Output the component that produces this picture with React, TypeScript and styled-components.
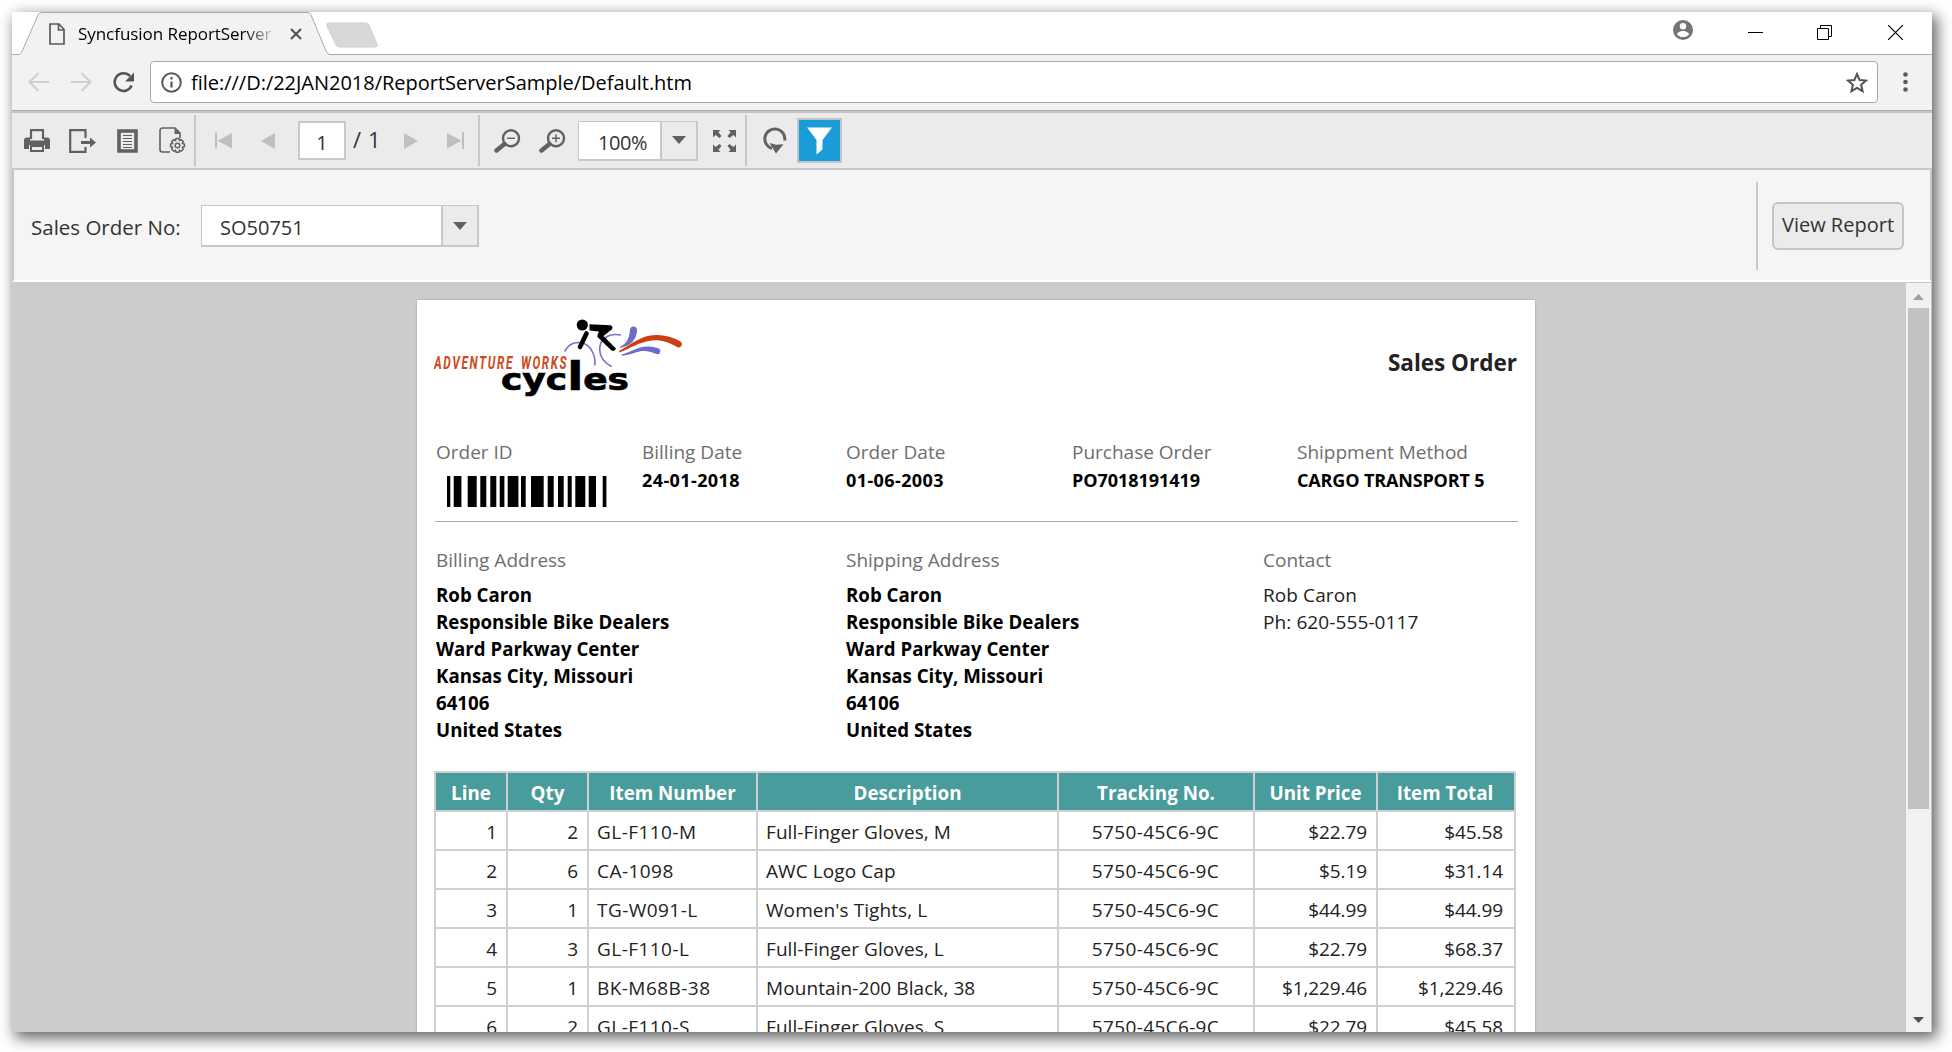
import React, { ReactNode } from "react";
import styled, { createGlobalStyle } from "styled-components";

const Global = createGlobalStyle`
  * { box-sizing: border-box; }
  html, body { margin: 0; padding: 0; background: #fff; overflow: hidden; }
  svg { display: block; flex: none; }
`;

const Desktop = styled.div`
  width: 1952px;
  height: 1052px;
  padding: 12px 20px 20px 12px;
  overflow: hidden;
  background: #fff;
  font-family: "Open Sans", "Noto Sans", sans-serif;
  font-size: 19px;
  color: #000;
`;

const BrowserWindow = styled.div`
  width: 1920px;
  height: 1020px;
  display: flex;
  flex-direction: column;
  background: #fff;
  box-shadow: 4px 5px 14px 1px rgba(0, 0, 0, 0.62);
`;

const Text = styled.span<{ size?: number; weight?: number; track?: number; color?: string; line?: number }>`
  display: block;
  white-space: pre;
  font-size: ${(p) => p.size ?? 19}px;
  font-weight: ${(p) => p.weight ?? 400};
  letter-spacing: ${(p) => p.track ?? 0}px;
  color: ${(p) => p.color ?? "#000"};
  line-height: ${(p) => p.line ?? 27}px;
`;

/* ---------- Browser chrome ---------- */

const TitleBar = styled.div`
  height: 43px;
  flex: none;
  display: flex;
  background: linear-gradient(#aaa, #aaa) 0 42px / 100% 1px no-repeat #fff;
`;

const Tab = styled.div`
  position: relative;
  width: 322px;
  height: 43px;
  display: flex;
  align-items: center;
  padding-left: 37px;
`;

const TabShape = styled.svg`
  position: absolute;
  left: 0;
  top: 0;
`;

const TabTitle = styled.div`
  position: relative;
  width: 200px;
  margin-left: 13px;
  overflow: hidden;
  mask-image: linear-gradient(90deg, #000 165px, transparent 200px);
`;

const TabItem = styled.div<{ left?: number }>`
  position: relative;
  margin-left: ${(p) => p.left ?? 0}px;
`;

const NewTab = styled.div`
  margin: 10px 0 0 -9px;
`;

const WindowControls = styled.div`
  margin-left: auto;
  display: flex;
  align-items: flex-start;
  padding: 8px 29px 0 0;
`;

const ControlSlot = styled.div<{ left?: number; top?: number }>`
  margin: ${(p) => p.top ?? 0}px 0 0 ${(p) => p.left ?? 0}px;
`;

const NavBar = styled.div`
  height: 58px;
  flex: none;
  display: flex;
  align-items: flex-start;
  padding-top: 6px;
  background: #f2f2f2;
  border-bottom: 2px solid #c4c4c4;
  box-shadow: inset 0 -1px #ababab;
`;

const NavButtons = styled.div`
  width: 138px;
  height: 42px;
  display: flex;
  align-items: center;
  padding-left: 16px;
`;

const AddressBar = styled.div`
  width: 1728px;
  height: 42px;
  display: flex;
  align-items: center;
  padding: 0 9px 0 10px;
  border: 1px solid #a9a9a9;
  border-radius: 4px;
  background: #fff;
`;

const Grow = styled.div`
  flex: 1;
`;

/* ---------- Viewer toolbar ---------- */

const Toolbar = styled.div`
  height: 57px;
  flex: none;
  display: flex;
  align-items: center;
  background: #ebebeb;
  border-bottom: 2px solid #c8c8c8;
`;

const ToolGroup = styled.div<{ width: number; pad: number }>`
  width: ${(p) => p.width}px;
  height: 51px;
  display: flex;
  align-items: center;
  padding-left: ${(p) => p.pad}px;
  border-right: 2px solid #c8c8c8;

  &:last-child { border-right: 0; }
`;

const Slot = styled.div<{ left?: number; lift?: number }>`
  margin-left: ${(p) => p.left ?? 0}px;
  padding-bottom: ${(p) => p.lift ?? 0}px;
`;

const PageInput = styled.div`
  width: 48px;
  height: 39px;
  margin-left: 23px;
  display: flex;
  align-items: center;
  justify-content: center;
  padding-top: 3px;
  border: 2px solid #c8c8c8;
  background: #fff;
`;

const Select = styled.div<{ width: number; height: number; left: number }>`
  width: ${(p) => p.width}px;
  height: ${(p) => p.height}px;
  margin-left: ${(p) => p.left}px;
  display: flex;
  border: solid #c8c8c8;
  border-width: 1px 2px 2px 1px;
  background: #fff;
`;

const SelectValue = styled.div<{ pad: number }>`
  flex: 1;
  display: flex;
  align-items: center;
  padding: 4px 0 0 ${(p) => p.pad}px;
`;

const SelectArrow = styled.div`
  width: 36px;
  display: flex;
  align-items: center;
  justify-content: center;
  border-left: 2px solid #c8c8c8;
  background: #ebebeb;
`;

const FilterButton = styled.div`
  width: 45px;
  height: 45px;
  margin-left: 10px;
  display: flex;
  align-items: center;
  justify-content: center;
  border: 2px solid #c4c4c4;
  background: #1a9cd9;
`;

/* ---------- Parameters ---------- */

const Params = styled.div`
  height: 112px;
  flex: none;
  display: flex;
  align-items: flex-start;
  border: solid #c8c8c8;
  border-width: 0 2px;
  border-bottom: 2px solid #fff;
  background: #f5f5f5;
`;

const ParamField = styled.div`
  display: flex;
  align-items: center;
  padding: 35px 0 0 17px;
`;

const ParamLabel = styled.div`
  width: 170px;
  padding-top: 2px;
`;

const ParamActions = styled.div`
  width: 174px;
  height: 88px;
  margin: 12px 0 0 auto;
  padding: 20px 0 0 14px;
  border-left: 2px solid #c8c8c8;
`;

const Button = styled.div`
  width: 132px;
  height: 48px;
  display: flex;
  justify-content: center;
  padding-top: 7px;
  border: 2px solid #c4c4c4;
  border-radius: 6px;
  background: #ebebeb;
`;

/* ---------- Report ---------- */

const Viewer = styled.div`
  flex: 1;
  min-height: 0;
  display: flex;
  overflow: hidden;
  background: #ccc;
`;

const Canvas = styled.div`
  width: 1894px;
  padding: 18px 0 0 405px;
`;

const Sheet = styled.div`
  width: 1118px;
  height: 800px;
  padding: 16px 17px 0 17px;
  background: #fff;
  box-shadow: 0 0 2px #999;
`;

const SheetHeader = styled.div`
  height: 122px;
  display: flex;
  justify-content: space-between;
`;

const Title = styled.div`
  padding: 33px 1px 0 0;
`;

const Summary = styled.div`
  display: grid;
  grid-template-columns: 206px 204px 226px 225px auto;
  height: 84px;
  margin-left: 1px;
  padding: 1px 0 0 1px;
  border-bottom: 1px solid #ababab;
`;

const Barcode = styled.div`
  padding: 10px 0 0 11px;
`;

const Addresses = styled.div`
  display: grid;
  grid-template-columns: 410px 417px auto;
  height: 249px;
  padding: 25px 0 0 2px;
`;

const AddressLines = styled.div<{ top: number }>`
  padding-top: ${(p) => p.top}px;
`;

const Table = styled.div`
  width: 1082px;
  border: solid #d0d0d0;
  border-width: 2px 0 0 2px;
`;

const Row = styled.div`
  display: grid;
  grid-template-columns: 72px 81px 169px 301px 196px 123px 138px;
  height: 39px;
`;

const Cell = styled.div<{ align?: string; head?: boolean }>`
  display: flex;
  justify-content: ${(p) => p.align ?? "flex-start"};
  padding: 7px ${(p) => (p.head ? 7 : 9)}px 0 ${(p) => (p.head ? 7 : 8)}px;
  border: solid #d0d0d0;
  border-width: 0 2px 2px 0;
  background: ${(p) => (p.head ? "#489c9b" : "#fff")};

  &:last-child { padding-right: ${(p) => (p.head ? 9 : 11)}px; }
`;

/* ---------- Scrollbar ---------- */

const Scrollbar = styled.div`
  width: 26px;
  display: flex;
  flex-direction: column;
  align-items: center;
  padding: 11px 1px 9px 0;
  border-right: 1px solid #c4c4c4;
  border-top: 1px solid #c4c4c4;
  background: #f1f1f1;
`;

const Thumb = styled.div`
  width: 21px;
  height: 501px;
  margin-top: 8px;
  background: #c1c1c1;
`;

/* ---------- Icons ---------- */

const G = "#5f6163";

const Svg = ({ w, h, children }: { w: number; h: number; children: ReactNode }) => (
  <svg width={w} height={h} viewBox={`0 0 ${w} ${h}`} fill="none">{children}</svg>
);

const Caret = () => (
  <Svg w={14} h={8}><path d="M0 0h14L7 8z" fill={G} /></Svg>
);

const PrintIcon = () => (
  <Svg w={26} h={24}>
    <path d="M7 10V1.200h12V10" stroke={G} strokeWidth="2.200" />
    <path d="M3 8.500h3v3h14v-3h3a3 3 0 0 1 3 3V20h-5v-4H5v4H0v-8.500a3 3 0 0 1 3-3z" fill={G} />
    <path d="M7 17h12v5H7z" fill="#ebebeb" stroke={G} strokeWidth="2" />
  </Svg>
);

const ExportIcon = () => (
  <Svg w={27} h={24}>
    <path d="M16.500 9V1.200H1.200v21.600h15.300V18" stroke={G} strokeWidth="2.200" />
    <path d="M12 12h9V8.500l6 5-6 5V15h-9z" fill={G} />
  </Svg>
);

const LayoutIcon = () => (
  <Svg w={21} h={24}>
    <path d="M2 2h17v20H2z" fill="#ebebeb" stroke={G} strokeWidth="3.600" />
    <path d="M6 6.500h9M6 9.500h9M6 12.500h9M6 15.500h9M6 18.500h9" stroke={G} strokeWidth="1.200" />
  </Svg>
);

const PageSetupIcon = () => (
  <Svg w={27} h={27}>
    <path d="M11 25H3.500A2.500 2.500 0 0 1 1 22.500v-19A2.500 2.500 0 0 1 3.500 1H16l5 5v5" stroke={G} strokeWidth="1.600" />
    <path d="M15.500 1v6h6z" fill={G} />
    <path d="M17 11.500h3l.5 2 1.800-.8 2 2-.9 1.800 2 .6v2.600l-2 .6.9 1.900-2 2-1.800-.9-.6 2h-2.800l-.6-2-1.800.9-2-2 .9-1.900-2-.6v-2.600l2-.6-.9-1.800 2-2 1.800.8z" fill="#ebebeb" stroke={G} strokeWidth="1.500" />
    <circle cx="18.500" cy="18.500" r="2.300" stroke={G} strokeWidth="1.500" />
  </Svg>
);

const N = "#bfbfbf";
const FirstIcon = () => <Svg w={17} h={17}><path d="M0 .5h2v16H0zM17 1v15.500L2.500 8.700z" fill={N} /></Svg>;
const PrevIcon = () => <Svg w={14} h={16}><path d="M14 0v16L0 8z" fill={N} /></Svg>;
const NextIcon = () => <Svg w={14} h={16}><path d="M0 0v16l14-8z" fill={N} /></Svg>;
const LastIcon = () => <Svg w={17} h={17}><path d="M15 0h2v17h-2zM0 1v15.500l14.500-7.800z" fill={N} /></Svg>;

const ZoomIcon = ({ plus }: { plus?: boolean }) => (
  <Svg w={27} h={24}>
    <circle cx="17" cy="9.300" r="8" stroke={G} strokeWidth="2.400" />
    <path d="M10.500 15L2.500 21.500" stroke={G} strokeWidth="4.400" strokeLinecap="round" />
    <path d={plus ? "M13 9.300h8M17 5.300v8" : "M13 9.300h8"} stroke={G} strokeWidth="1.400" />
  </Svg>
);

const FitIcon = () => (
  <Svg w={23} h={22}>
    <g fill={G}>
      <path d="M0 0h7.500L5.400 2.200 8.500 6 6.500 8 2.600 5 0 7.500z" />
      <path d="M23 0h-7.500l2.100 2.200L14.500 6l2 2 3.900-3L23 7.500z" />
      <path d="M0 22h7.500l-2.100-2.200L8.500 16l-2-2-3.900 3L0 14.500z" />
      <path d="M23 22h-7.500l2.100-2.200L14.500 16l2-2 3.900 3 2.600-2.500z" />
    </g>
  </Svg>
);

const RefreshIcon = () => (
  <Svg w={24} h={27}>
    <path d="M9 21.500A10 10 0 1 1 21.700 13.500" stroke={G} strokeWidth="3" />
    <path d="M6.500 16l6.500 1.800 7.500-.6-7.500 9.300z" fill={G} />
  </Svg>
);

const FunnelIcon = () => (
  <Svg w={25} h={28}><path d="M0 .5h25L15.500 13v9.500l-6 5V13z" fill="#fff" /></Svg>
);

const BARS: [number, number][] = [
  [0, 3.3], [6.7, 7.7], [20.7, 9], [33.3, 6], [43.3, 6], [52.7, 4.7], [60.7, 10.7], [74, 4.7],
  [84, 12.7], [100.7, 6], [111, 5.7], [120.7, 4], [128.3, 10], [141.7, 7.3], [155.7, 3.7],
];

const Logo = () => (
  <svg width="255" height="84" viewBox="0 0 255 84">
    <g fill="none" stroke="#7672cc" strokeWidth="1.600">
      <path d="M130.500 35.500C134 29 139 26.300 145 26.500c6.500.3 11 4 13.500 9.500 2 4 3.500 8 2 13.500" />
      <path d="M187 19c-5-.8-10-.7-14 1.500-5 3-7.500 8-7.300 13.500.3 7.500 5 13 12 16.500" />
    </g>
    <g fill="#6f6bcb">
      <path d="M186 31c7-4 9-8 10-17a3.500 3.500 0 0 1 7 0c0 10-7 16-17 18z" />
      <path d="M187.500 38.500c8.500-1.500 15.500-8 25.500-8 7 0 11 1.500 12.500 2.500a3 3 0 0 1-3 5c-8.500-4-14.500-3.500-19.500-2-6 2-10 3.500-15 3.800z" />
    </g>
    <path d="M185 35c13-7 22-16 37-16 12 0 21 4 25 7a3.300 3.300 0 0 1-3 5.500c-10-5.500-18-8-26-7-13 1.500-21 7.500-32.500 12z" fill="#cc3d12" />
    <circle cx="148.300" cy="9" r="5.600" />
    <path d="M155.500 8.300l21 .9q3 1 1.500 4L169.500 20l12.500 12.500q-1.500 3.500-4.500 2L163.500 21q-.5-2 1.500-5.500l-9.500-1z" />
    <path d="M152.500 17.500L146 31" stroke="#000" strokeWidth="4.600" strokeLinecap="round" />
    <g fontFamily="Roboto, sans-serif" fontStyle="italic" fontWeight="700" fontSize="18.500" fill="#cc4a20" letterSpacing="2.500">
      <text x="0" y="52.500" textLength="80" lengthAdjust="spacingAndGlyphs">ADVENTURE</text>
      <text x="87" y="52.500" textLength="47" lengthAdjust="spacingAndGlyphs">WORKS</text>
    </g>
    <text transform="translate(67 73.500) scale(1.200 1)" fontFamily="'DejaVu Sans', sans-serif" fontWeight="700" fontSize="30" stroke="#000" strokeWidth=".7">
      cyc<tspan fontSize="39">l</tspan>es
    </text>
  </svg>
);

/* ---------- Data ---------- */

const ADDRESS = ["Rob Caron", "Responsible Bike Dealers", "Ward Parkway Center", "Kansas City, Missouri", "64106", "United States"];
const SUMMARY: [string, string, number][] = [
  ["Billing Date", "24-01-2018", 0.4],
  ["Order Date", "01-06-2003", 0.4],
  ["Purchase Order", "PO7018191419", -0.05],
  ["Shippment Method", "CARGO TRANSPORT 5", -0.15],
];
const HEAD = ["Line", "Qty", "Item Number", "Description", "Tracking No.", "Unit Price", "Item Total"];
const ALIGN = ["flex-end", "flex-end", "flex-start", "flex-start", "center", "flex-end", "flex-end"];
const TRACK = [0, 0, 0.45, 0.08, 0.35, -0.1, -0.1];
const ROWS = [
  ["1", "2", "GL-F110-M", "Full-Finger Gloves, M", "5750-45C6-9C", "$22.79", "$45.58"],
  ["2", "6", "CA-1098", "AWC Logo Cap", "5750-45C6-9C", "$5.19", "$31.14"],
  ["3", "1", "TG-W091-L", "Women's Tights, L", "5750-45C6-9C", "$44.99", "$44.99"],
  ["4", "3", "GL-F110-L", "Full-Finger Gloves, L", "5750-45C6-9C", "$22.79", "$68.37"],
  ["5", "1", "BK-M68B-38", "Mountain-200 Black, 38", "5750-45C6-9C", "$1,229.46", "$1,229.46"],
  ["6", "2", "GL-F110-S", "Full-Finger Gloves, S", "5750-45C6-9C", "$22.79", "$45.58"],
];

const Label = ({ children }: { children: ReactNode }) => <Text size={19} color="#6e6e6e">{children}</Text>;

export default function App() {
  return (
    <Desktop>
      <Global />
      <BrowserWindow>
        <TitleBar>
          <Tab>
            <TabShape width="322" height="43" viewBox="0 0 322 43">
              <path d="M0 42.500h6q3 0 4-3L26 3q1-2.500 4-2.500h265q3 0 4 2.500l15 36q1.500 3.500 4 3.500h4V43H0z" fill="#f2f2f2" />
              <path d="M0 42.500h6q3 0 4-3L26 3q1-2.500 4-2.500h265q3 0 4 2.500l15 36q1.500 3.500 4 3.500h4" fill="none" stroke="#aaa" />
            </TabShape>
            <TabItem>
              <Svg w={16} h={22}><path d="M1 1h9l5 5.500V21H1zM9.500 1v6H15" stroke="#5a5a5a" strokeWidth="1.700" /></Svg>
            </TabItem>
            <TabTitle><Text size={17} line={24} track={-0.05}>Syncfusion ReportServer S</Text></TabTitle>
            <TabItem left={12}>
              <Svg w={12} h={12}><path d="M1 1l10 10M11 1L1 11" stroke="#505050" strokeWidth="2" /></Svg>
            </TabItem>
          </Tab>
          <NewTab>
            <Svg w={53} h={27}><path d="M3 1h37q3 0 4 2l8 19q1 3-2 3H15q-3 0-4-2L2 4q-1-3 1-3z" fill="#d8d8d8" stroke="#d0d0d0" /></Svg>
          </NewTab>
          <WindowControls>
            <Svg w={20} h={20}>
              <circle cx="10" cy="10" r="10" fill="#747474" />
              <circle cx="10" cy="6.300" r="3.200" fill="#fff" />
              <path d="M4 14.500c0-2.300 3.500-3.500 6-3.500s6 1.200 6 3.500c-2.800 3.400-9.200 3.400-12 0z" fill="#fff" />
            </Svg>
            <ControlSlot left={55} top={12}><Svg w={15} h={1}><path d="M0 .5h15" stroke="#000" /></Svg></ControlSlot>
            <ControlSlot left={54} top={5}><Svg w={15} h={15}><path d="M.5 3.500h11v11H.5zM3.500 3.500v-3h11v11h-3" stroke="#000" /></Svg></ControlSlot>
            <ControlSlot left={56} top={5}><Svg w={15} h={15}><path d="M0 0l15 15M15 0L0 15" stroke="#000" strokeWidth="1.200" /></Svg></ControlSlot>
          </WindowControls>
        </TitleBar>

        <NavBar>
          <NavButtons>
            <Svg w={21} h={20}><path d="M21 10H2M10.500 1L1.500 10l9 9" stroke="#d0d0d0" strokeWidth="2.200" /></Svg>
            <Slot left={22}><Svg w={21} h={20}><path d="M0 10h19M10.500 1l9 9-9 9" stroke="#d0d0d0" strokeWidth="2.200" /></Svg></Slot>
            <Slot left={21}>
              <Svg w={22} h={21}>
                <path d="M17 4.200A8.800 8.800 0 1 0 18.600 13.500" stroke="#555" strokeWidth="2.600" />
                <path d="M21 .5v9h-9z" fill="#555" />
              </Svg>
            </Slot>
          </NavButtons>
          <AddressBar>
            <Svg w={21} h={21}>
              <circle cx="10.500" cy="10.500" r="9.300" stroke="#5a5a5a" strokeWidth="2" />
              <path d="M10.500 9.500v6M10.500 5v2.500" stroke="#5a5a5a" strokeWidth="2.200" />
            </Svg>
            <Slot left={9}><Text size={20} track={-0.02}>file:///D:/22JAN2018/ReportServerSample/Default.htm</Text></Slot>
            <Grow />
            <Svg w={22} h={21}><path d="M11 2l2.600 6 6.400.6-4.900 4.200 1.500 6.400L11 15.800l-5.600 3.400 1.500-6.400L2 8.600 8.400 8z" stroke="#555" strokeWidth="2" /></Svg>
          </AddressBar>
          <Slot left={25}>
            <Svg w={5} h={42}><g fill="#5a5a5a"><circle cx="2.500" cy="13.500" r="2.300" /><circle cx="2.500" cy="21" r="2.300" /><circle cx="2.500" cy="28.500" r="2.300" /></g></Svg>
          </Slot>
        </NavBar>

        <Toolbar>
          <ToolGroup width={184} pad={12}>
            <PrintIcon />
            <Slot left={19}><ExportIcon /></Slot>
            <Slot left={21}><LayoutIcon /></Slot>
            <Slot left={21}><PageSetupIcon /></Slot>
          </ToolGroup>
          <ToolGroup width={284} pad={19}>
            <FirstIcon />
            <Slot left={29}><PrevIcon /></Slot>
            <PageInput><Text size={20} color="#333">1</Text></PageInput>
            <Slot left={7} lift={2}><Text size={22} color="#333" track={0.6}>/ 1</Text></Slot>
            <Slot left={23}><NextIcon /></Slot>
            <Slot left={29}><LastIcon /></Slot>
          </ToolGroup>
          <ToolGroup width={267} pad={14}>
            <ZoomIcon />
            <Slot left={18}><ZoomIcon plus /></Slot>
            <Select width={120} height={40} left={12}>
              <SelectValue pad={19}><Text size={20} color="#333" track={-0.4}>100%</Text></SelectValue>
              <SelectArrow><Caret /></SelectArrow>
            </Select>
            <Slot left={15}><FitIcon /></Slot>
          </ToolGroup>
          <ToolGroup width={200} pad={16}>
            <RefreshIcon />
            <FilterButton><FunnelIcon /></FilterButton>
          </ToolGroup>
        </Toolbar>

        <Params>
          <ParamField>
            <ParamLabel><Text size={20.5} color="#333">Sales Order No:</Text></ParamLabel>
            <Select width={278} height={42} left={0}>
              <SelectValue pad={18}><Text size={20} color="#333">SO50751</Text></SelectValue>
              <SelectArrow><Caret /></SelectArrow>
            </Select>
          </ParamField>
          <ParamActions><Button><Text size={20} color="#333">View Report</Text></Button></ParamActions>
        </Params>

        <Viewer>
          <Canvas>
            <Sheet>
              <SheetHeader>
                <Logo />
                <Title><Text size={22.5} weight={700} color="#222">Sales Order</Text></Title>
              </SheetHeader>
              <Summary>
                <div>
                  <Label>Order ID</Label>
                  <Barcode>
                    <Svg w={160} h={31}>
                      {BARS.map(([x, w]) => <rect key={x} x={x} y="0" width={w} height="31" fill="#000" />)}
                    </Svg>
                  </Barcode>
                </div>
                {SUMMARY.map(([label, value, track]) => (
                  <div key={label}>
                    <Label>{label}</Label>
                    <Text size={18} weight={700} line={29} track={track}>{value}</Text>
                  </div>
                ))}
              </Summary>
              <Addresses>
                {["Billing Address", "Shipping Address"].map((label) => (
                  <div key={label}>
                    <Label>{label}</Label>
                    <AddressLines top={7}>
                      {ADDRESS.map((l) => <Text key={l} size={18.7} weight={700}>{l}</Text>)}
                    </AddressLines>
                  </div>
                ))}
                <div>
                  <Label>Contact</Label>
                  <AddressLines top={8}>
                    <Text size={19} track={0.1} color="#222">Rob Caron</Text>
                    <Text size={19} track={0.1} color="#222">Ph: 620-555-0117</Text>
                  </AddressLines>
                </div>
              </Addresses>
              <Table>
                <Row>{HEAD.map((h) => <Cell key={h} head align="center"><Text size={18.8} weight={700} color="#fff">{h}</Text></Cell>)}</Row>
                {ROWS.map((r) => (
                  <Row key={r[0]}>
                    {r.map((c, i) => <Cell key={i} align={ALIGN[i]}><Text size={19} track={TRACK[i]} color="#222">{c}</Text></Cell>)}
                  </Row>
                ))}
              </Table>
            </Sheet>
          </Canvas>
          <Scrollbar>
            <Svg w={11} h={6}><path d="M5.500 0L11 6H0z" fill="#a0a0a0" /></Svg>
            <Thumb />
            <Grow />
            <Svg w={11} h={6}><path d="M5.500 6L11 0H0z" fill="#505050" /></Svg>
          </Scrollbar>
        </Viewer>
      </BrowserWindow>
    </Desktop>
  );
}
